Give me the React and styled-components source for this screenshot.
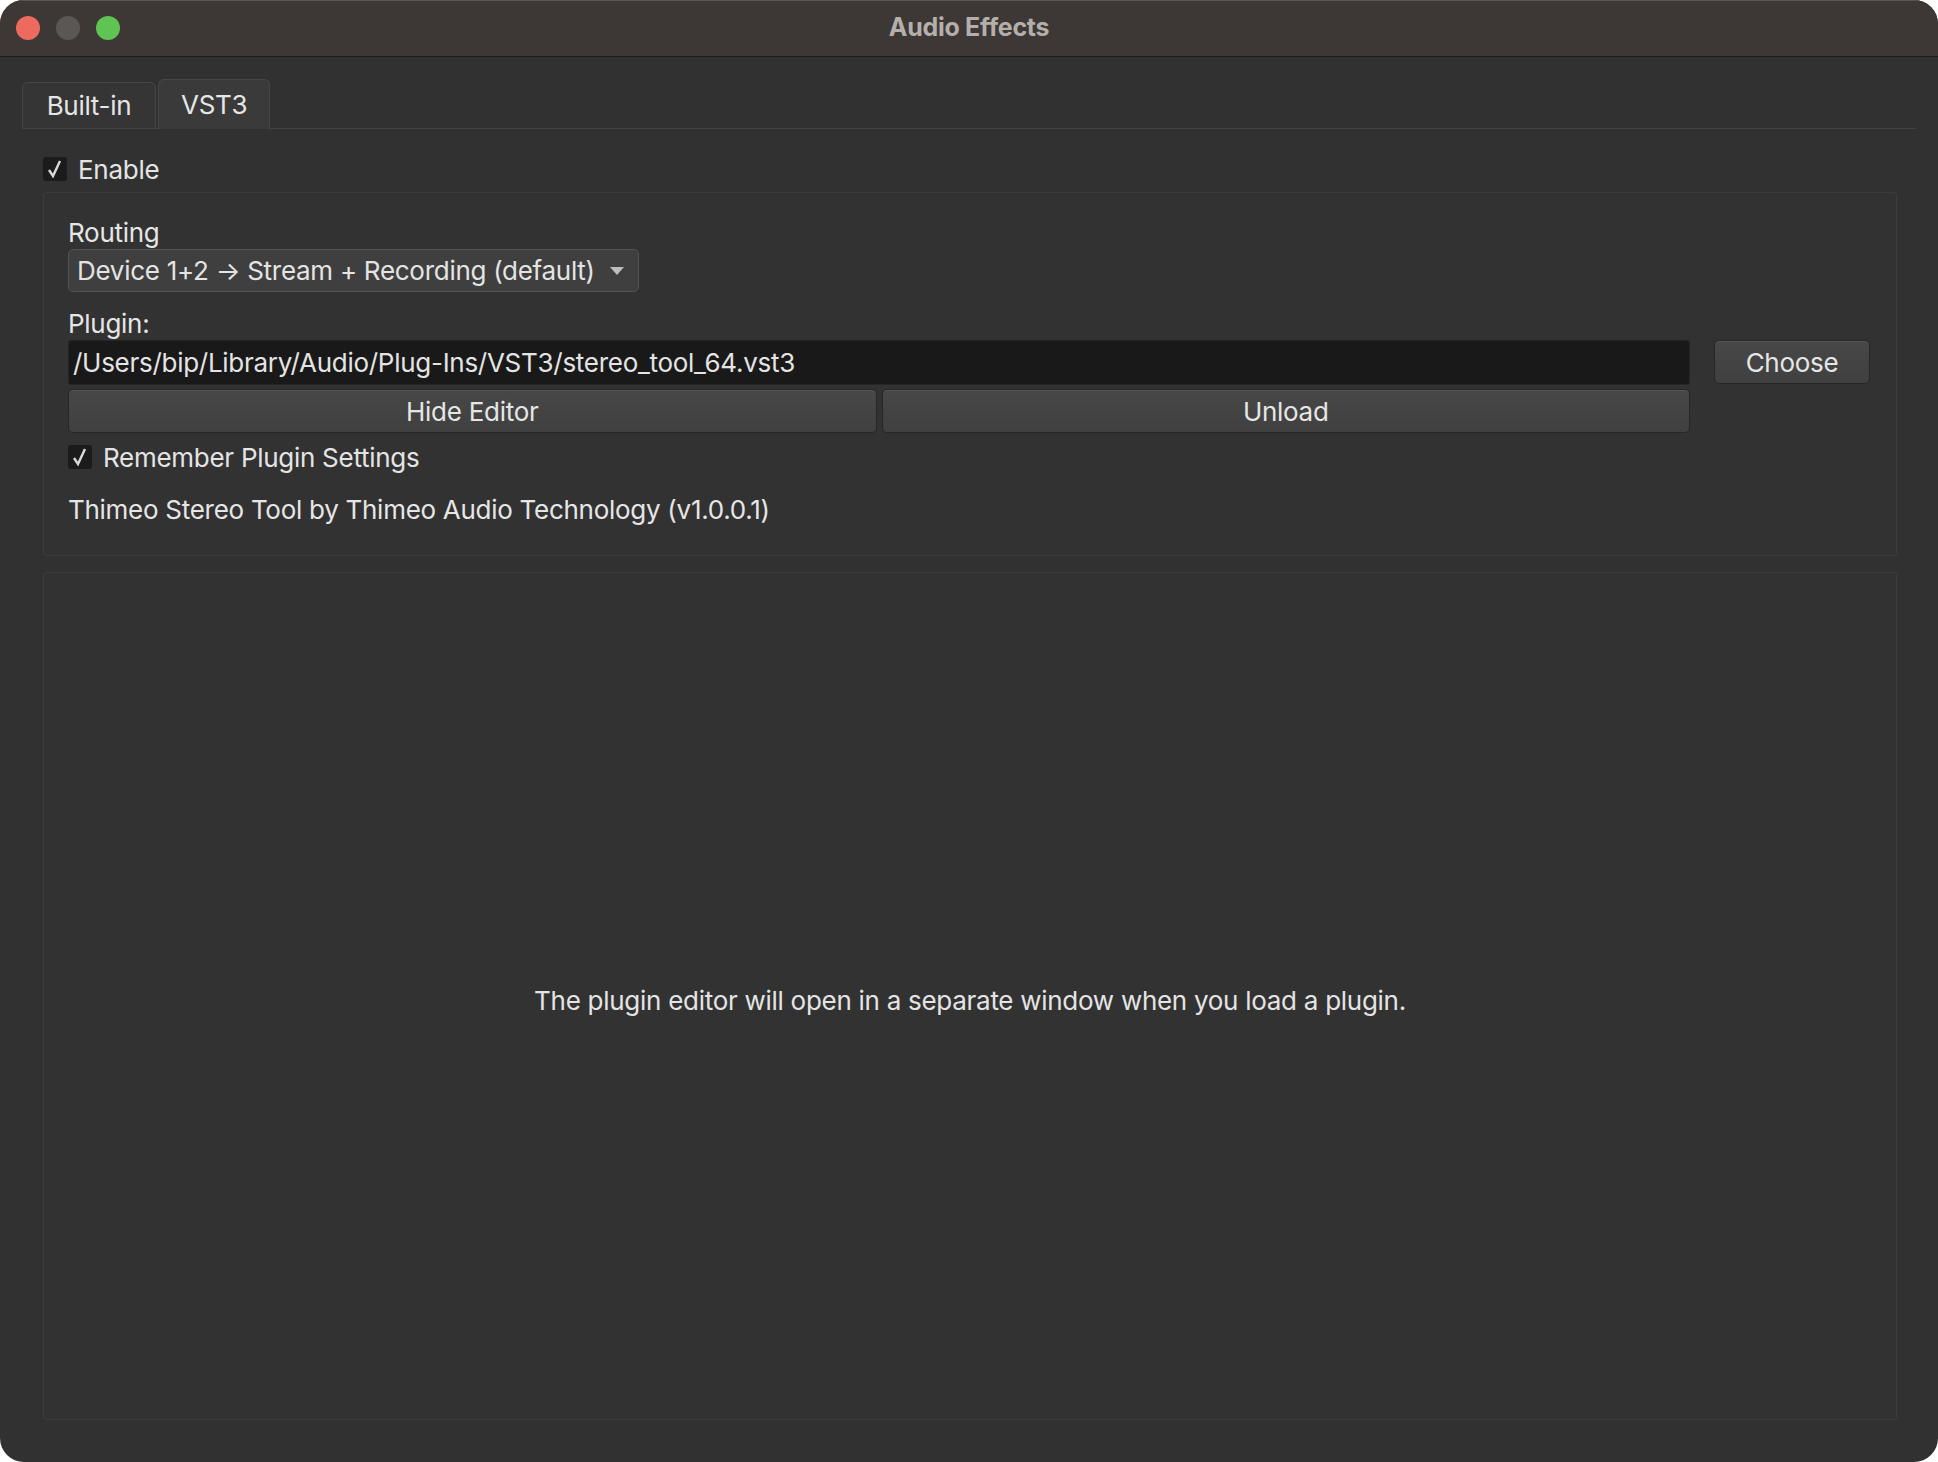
import React from 'react';
import styled, { createGlobalStyle } from 'styled-components';

const GlobalStyle = createGlobalStyle`
  html, body {
    margin: 0;
    padding: 0;
    background: #ffffff;
  }
  body {
    font-family: Inter, "Noto Sans", "Liberation Sans", sans-serif;
    font-size: 26px;
    letter-spacing: -0.28px;
    color: #e4e4e4;
  }
`;

const Window = styled.div`
  width: 1938px;
  height: 1462px;
  display: flex;
  flex-direction: column;
  background: #313131;
  border-radius: 24px;
  overflow: hidden;
`;

const TitleBar = styled.div`
  height: 56px;
  flex: none;
  display: flex;
  align-items: center;
  position: relative;
  background: #3d3835;
  border-bottom: 1px solid #1d1b1a;
  box-shadow: inset 0 1px 0 #5a5552;
`;

const Lights = styled.div`
  display: flex;
  gap: 16px;
  padding-left: 16px;
`;

const Light = styled.span`
  width: 24px;
  height: 24px;
  border-radius: 50%;
  background: ${(p) => p.color};
`;

const Title = styled.div`
  position: absolute;
  left: 0;
  right: 0;
  top: 0;
  bottom: 2px;
  display: flex;
  align-items: center;
  justify-content: center;
  font-weight: 700;
  font-size: 25px;
  color: #b4afab;
  pointer-events: none;
`;

const Content = styled.div`
  flex: 1;
  display: flex;
  flex-direction: column;
  padding: 21px 22px 42px 22px;
  min-height: 0;
`;

const TabBar = styled.div`
  display: flex;
  align-items: flex-end;
  height: 50px;
  border-bottom: 1px solid #414141;
`;

const Tab = styled.div`
  height: ${(p) => (p.active ? '50px' : '46px')};
  padding: 0 22px;
  box-sizing: border-box;
  display: flex;
  align-items: center;
  justify-content: center;
  background: ${(p) => (p.active ? '#3a3a3a' : '#353535')};
  border: 1px solid #464646;
  border-bottom: none;
  border-radius: 6px 6px 0 0;
  margin-right: 2px;
  color: #e6e6e6;
  min-width: ${(p) => (p.active ? '110px' : '134px')};
  margin-bottom: ${(p) => (p.active ? '-1px' : '0')};
`;

const Body = styled.div`
  flex: 1;
  display: flex;
  flex-direction: column;
  padding: 0 19px 0 21px;
  min-height: 0;
`;

const CheckRow = styled.label`
  display: flex;
  align-items: center;
  gap: 11px;
  height: 24px;
  margin: ${(p) => p.margin || '0'};
`;

const Box = styled.span`
  width: 24px;
  height: 24px;
  flex: none;
  background: #1b1b1b;
  border-radius: 3px;
  display: flex;
  align-items: center;
  justify-content: center;
`;

const Group = styled.div`
  border: 1px solid #3c3c3c;
  border-radius: 3px;
  background: #323232;
  box-sizing: border-box;
`;

const SettingsGroup = styled(Group)`
  margin-top: 11px;
  height: 364px;
  padding: 22px 26px 0 24px;
  display: flex;
  flex-direction: column;
`;

const EditorGroup = styled(Group)`
  flex: 1;
  margin-top: 16px;
  display: flex;
  align-items: center;
  justify-content: center;
  padding-top: 8px;
`;

const Label = styled.div`
  height: 34px;
  display: flex;
  align-items: center;
  color: #e6e6e6;
`;

const Combo = styled.div`
  width: 571px;
  height: 43px;
  box-sizing: border-box;
  display: flex;
  align-items: center;
  justify-content: space-between;
  padding: 0 14px 0 8px;
  background: #3f3f3f;
  border: 1px solid #525252;
  border-radius: 5px;
  margin-bottom: 14px;
`;

const Arrow = styled.span`
  width: 0;
  height: 0;
  border-left: 7px solid transparent;
  border-right: 7px solid transparent;
  border-top: 8px solid #bdbdbd;
`;

const PluginGrid = styled.div`
  display: grid;
  grid-template-columns: 1fr 156px;
  column-gap: 24px;
  row-gap: 4px;
`;

const PathField = styled.div`
  height: 45px;
  box-sizing: border-box;
  background: #191919;
  border: 1px solid #262626;
  border-radius: 3px;
  display: flex;
  align-items: center;
  padding-left: 4px;
  white-space: nowrap;
  overflow: hidden;
`;

const ButtonPair = styled.div`
  display: grid;
  grid-template-columns: 1fr 1fr;
  gap: 5px;
`;

const Button = styled.div`
  height: 44px;
  box-sizing: border-box;
  display: flex;
  align-items: center;
  justify-content: center;
  background: linear-gradient(#474747, #404040);
  border: 1px solid #262626;
  box-shadow: inset 0 1px 0 #575757;
  border-radius: 5px;
  color: #e6e6e6;
`;

const Info = styled.div`
  margin-top: 25px;
  color: #e6e6e6;
`;

const Check = () => (
  <svg width="20" height="20" viewBox="0 0 20 20">
    <polyline points="4,11 8,17 15,2" fill="none" stroke="#d8d8d8" strokeWidth="2.4" />
  </svg>
);

export default function App() {
  return (
    <>
      <GlobalStyle />
      <Window>
        <TitleBar>
          <Lights>
            <Light color="#ec6a5e" />
            <Light color="#5b5755" />
            <Light color="#60c453" />
          </Lights>
          <Title>Audio Effects</Title>
        </TitleBar>
        <Content>
          <TabBar>
            <Tab>Built-in</Tab>
            <Tab active>VST3</Tab>
          </TabBar>
          <Body>
            <CheckRow margin="28px 0 0 0">
              <Box><Check /></Box>
              Enable
            </CheckRow>
            <SettingsGroup>
              <Label>Routing</Label>
              <Combo>
                <span>Device 1+2 → Stream + Recording (default)</span>
                <Arrow />
              </Combo>
              <Label>Plugin:</Label>
              <PluginGrid>
                <PathField>/Users/bip/Library/Audio/Plug-Ins/VST3/stereo_tool_64.vst3</PathField>
                <Button>Choose</Button>
                <ButtonPair>
                  <Button>Hide Editor</Button>
                  <Button>Unload</Button>
                </ButtonPair>
              </PluginGrid>
              <CheckRow margin="12px 0 0 0">
                <Box><Check /></Box>
                Remember Plugin Settings
              </CheckRow>
              <Info>Thimeo Stereo Tool by Thimeo Audio Technology (v1.0.0.1)</Info>
            </SettingsGroup>
            <EditorGroup>
              The plugin editor will open in a separate window when you load a plugin.
            </EditorGroup>
          </Body>
        </Content>
      </Window>
    </>
  );
}
